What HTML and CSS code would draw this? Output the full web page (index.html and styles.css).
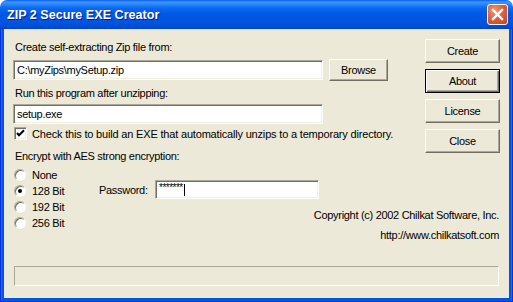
FILE: index.html
```html
<!DOCTYPE html>
<html>
<head>
<meta charset="utf-8">
<link rel="stylesheet" href="styles.css">
</head>
<body>
<div class="window">
  <div class="titlebar">
    <span class="title">ZIP 2 Secure EXE Creator</span>
    <span class="close">
      <svg width="19" height="19" viewBox="0 0 19 19"><path d="M5 5 L14 14 M14 5 L5 14" stroke="#fff" stroke-width="2.4" stroke-linecap="square" fill="none"/></svg>
    </span>
  </div>
  <div class="frame">
    <div class="content">
      <div class="main">
        <div class="left">
          <div class="label l1">Create self-extracting Zip file from:</div>
          <div class="row r1">
            <div class="input path">C:\myZips\mySetup.zip</div>
            <div class="btn browse">Browse</div>
          </div>
          <div class="label l2">Run this program after unzipping:</div>
          <div class="input path r2">setup.exe</div>
          <div class="check-row">
            <span class="checkbox"><svg width="11" height="11" viewBox="0 0 11 11"><path d="M2 5 L4 7.2 L9 2.2" stroke="#000" stroke-width="2" fill="none"/></svg></span>
            <span class="check-text">Check this to build an EXE that automatically unzips to a temporary directory.</span>
          </div>
          <div class="label l3">Encrypt with AES strong encryption:</div>
        </div>
        <div class="right">
          <div class="btn side-btn">Create</div>
          <div class="btn side-btn default">About</div>
          <div class="btn side-btn">License</div>
          <div class="btn side-btn">Close</div>
        </div>
      </div>
      <div class="enc">
        <div class="radios">
          <div class="radio-row"><span class="radio"></span><span>None</span></div>
          <div class="radio-row"><span class="radio on"></span><span>128 Bit</span></div>
          <div class="radio-row"><span class="radio"></span><span>192 Bit</span></div>
          <div class="radio-row"><span class="radio"></span><span>256 Bit</span></div>
        </div>
        <div class="side">
          <div class="pw-row">
            <span class="pw-label">Password:</span>
            <div class="input pw"><span class="stars">*******</span><span class="caret"></span></div>
          </div>
          <div class="copy">Copyright (c) 2002 Chilkat Software, Inc.</div>
          <div class="copy url">http://www.chilkatsoft.com</div>
        </div>
      </div>
      <div class="status"></div>
    </div>
  </div>
</div>
</body>
</html>
```

FILE: styles.css
```css
html, body {
  margin: 0;
  padding: 0;
  background: #ffffff;
}

.window {
  width: 513px;
  height: 302px;
  display: flex;
  flex-direction: column;
  overflow: hidden;
  border-radius: 7px 7px 0 0;
  font-family: "Liberation Sans", Arial, sans-serif;
  font-size: 11px;
  letter-spacing: -0.3px;
  color: #000;
}

.titlebar {
  height: 29px;
  flex: none;
  display: flex;
  align-items: center;
  justify-content: space-between;
  padding: 0 5px 0 7px;
  background: linear-gradient(to bottom, #0A5CE8 0px, #3D95FF 2px, #2B88FB 4px, #0C68F0 8px, #0058E6 14px, #0055E0 22px, #004CD6 27px, #0040C2 29px);
}

.title {
  color: #fff;
  font-weight: bold;
  font-size: 12.6px;
  letter-spacing: 0;
  text-shadow: 1px 1px 0 #0A1E8A;
  margin-top: 1px;
}

.close {
  width: 19px;
  height: 19px;
  border: 1px solid #fff;
  border-radius: 3px;
  background: radial-gradient(circle at 35% 30%, #F09878 0%, #E2603A 45%, #C8401E 100%);
  display: flex;
  align-items: center;
  justify-content: center;
}

.close svg { display: block; }

.frame {
  flex: 1;
  display: flex;
  padding: 0 4px 4px;
  background: #0055E5;
  box-shadow: inset 1px 0 #0831D9, inset -1px 0 #0831D9, inset 0 -1px #0831D9, inset 2px 0 #166AEE, inset -2px 0 #166AEE;
}

.content {
  flex: 1;
  display: flex;
  flex-direction: column;
  background: #ECE9D8;
  padding: 10px 9px 12px 9px;
}

.main {
  display: flex;
}

.left {
  flex: 1;
  display: flex;
  flex-direction: column;
}

.label {
  line-height: 13px;
  padding-left: 2px;
  white-space: nowrap;
}

.l1 { margin-top: 2px; }
.l2 { margin-top: 6px; }
.l3 { margin-top: 10px; }

.row {
  display: flex;
  align-items: center;
  height: 22px;
}

.r1 { margin-top: 5px; }

.input {
  box-sizing: border-box;
  background: #fff;
  border: 1px solid;
  border-color: #ACA899 #fff #fff #ACA899;
  box-shadow: inset 1px 1px #716F64, inset -1px -1px #F1EFE2;
  padding-left: 3px;
  display: flex;
  align-items: center;
  white-space: nowrap;
}

.path {
  width: 310px;
  height: 20px;
}

.r2 { margin-top: 4px; }

.btn {
  box-sizing: border-box;
  background: #ECE9D8;
  border: 1px solid;
  border-color: #fff #716F64 #716F64 #fff;
  box-shadow: inset -1px -1px #ACA899;
  display: flex;
  align-items: center;
  justify-content: center;
}

.browse {
  width: 59px;
  height: 22px;
  margin-left: 6px;
}

.check-row {
  display: flex;
  align-items: center;
  height: 13px;
  margin-top: 3px;
}

.checkbox {
  box-sizing: border-box;
  width: 13px;
  height: 13px;
  margin-left: 1px;
  background: #fff;
  border: 1px solid;
  border-color: #ACA899 #fff #fff #ACA899;
  box-shadow: inset 1px 1px #716F64, inset -1px -1px #F1EFE2;
  display: flex;
  align-items: center;
  justify-content: center;
}

.checkbox svg { display: block; }

.check-text {
  margin-left: 5px;
  white-space: nowrap;
  letter-spacing: -0.18px;
}

.right {
  width: 75px;
  display: flex;
  flex-direction: column;
  gap: 6px;
}

.side-btn {
  height: 24px;
}

.default {
  border: 1px solid #000;
  box-shadow: inset 1px 1px #fff, inset -1px -1px #716F64, inset -2px -2px #ACA899;
}

.enc {
  display: flex;
  margin-top: 4px;
}

.radios {
  width: 86px;
  display: flex;
  flex-direction: column;
}

.radio-row {
  height: 16px;
  display: flex;
  align-items: center;
}

.radio {
  box-sizing: border-box;
  width: 12px;
  height: 12px;
  margin-left: 1px;
  margin-right: 6px;
  border-radius: 50%;
  background: #fff;
  border: 1px solid;
  border-color: #ACA899 #fff #fff #ACA899;
  box-shadow: inset 1px 1px #716F64;
  display: flex;
  align-items: center;
  justify-content: center;
}

.radio.on::after {
  content: "";
  width: 4px;
  height: 4px;
  border-radius: 50%;
  background: #000;
}

.side {
  flex: 1;
  display: flex;
  flex-direction: column;
}

.pw-row {
  display: flex;
  align-items: center;
  height: 19px;
  margin-top: 13px;
}

.pw-label {
  width: 56px;
}

.pw {
  width: 164px;
  height: 19px;
}

.stars {
  font-size: 10px;
  letter-spacing: -0.5px;
  line-height: 10px;
  margin-top: -3px;
}

.caret {
  width: 1px;
  height: 12px;
  background: #000;
  margin-left: 1px;
}

.copy {
  text-align: right;
  line-height: 13px;
  margin-right: 1px;
  margin-top: 10px;
  white-space: nowrap;
}

.url { margin-top: 7px; }

.status {
  box-sizing: border-box;
  height: 20px;
  margin: auto 1px 0 1px;
  border: 1px solid;
  border-color: #ACA899 #fff #fff #ACA899;
}
```
